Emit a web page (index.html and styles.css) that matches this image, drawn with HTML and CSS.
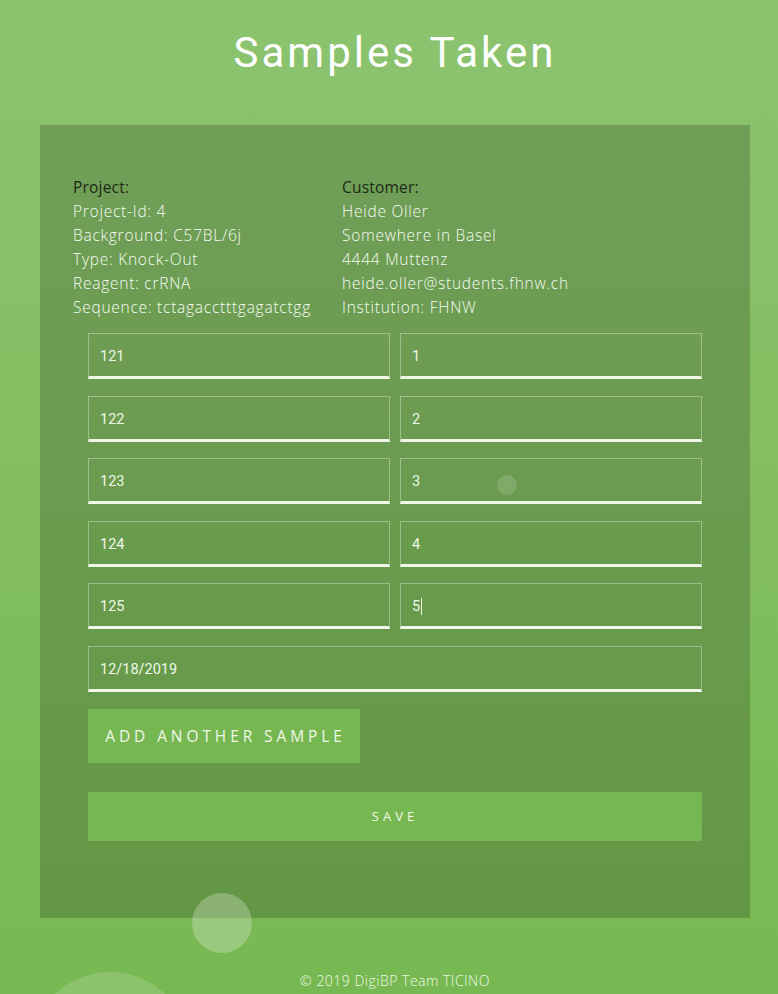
FILE: index.html
```html
<!DOCTYPE html>
<html lang="en">
<head>
<meta charset="utf-8">
<title>Samples Taken</title>
<link rel="stylesheet" href="styles.css">
</head>
<body>
<div class="bubbles">
  <span class="bubble b1"></span>
  <span class="bubble b2"></span>
  <span class="bubble b3"></span>
</div>
<main class="page">
  <h1 class="title">Samples Taken</h1>
  <section class="panel">
    <div class="info">
      <div class="col">
        <div class="head">Project:</div>
        <div>Project-Id: 4</div>
        <div>Background: C57BL/6j</div>
        <div>Type: Knock-Out</div>
        <div>Reagent: crRNA</div>
        <div>Sequence: tctagacctttgagatctgg</div>
      </div>
      <div class="col">
        <div class="head">Customer:</div>
        <div>Heide Oller</div>
        <div>Somewhere in Basel</div>
        <div>4444 Muttenz</div>
        <div>heide.oller@students.fhnw.ch</div>
        <div>Institution: FHNW</div>
      </div>
    </div>
    <form class="form">
      <div class="row"><input class="field" value="121"><input class="field" value="1"></div>
      <div class="row"><input class="field" value="122"><input class="field" value="2"></div>
      <div class="row"><input class="field" value="123"><input class="field" value="3"></div>
      <div class="row"><input class="field" value="124"><input class="field" value="4"></div>
      <div class="row"><input class="field" value="125"><div class="field caret-field">5<span class="caret"></span></div></div>
      <div class="row single"><input class="field" value="12/18/2019"></div>
      <div class="actions"><button type="button" class="btn add">ADD ANOTHER SAMPLE</button></div>
      <button type="button" class="btn save">SAVE</button>
    </form>
  </section>
  <footer class="footer">© 2019 DigiBP Team TICINO</footer>
</main>
</body>
</html>
```

FILE: styles.css
```css
* { box-sizing: border-box; }
html, body { margin: 0; height: 100%; }
body {
  background: linear-gradient(to bottom, #8cc36f 0%, #78b852 100%);
  font-family: "Open Sans", "Noto Sans", sans-serif;
  overflow: hidden;
  position: relative;
}
.bubbles { position: absolute; inset: 0; pointer-events: none; z-index: 2; }
.bubble { position: absolute; border-radius: 50%; background: rgba(255,255,255,0.25); }
.b1 { left: 192px; top: 893px; width: 60px; height: 60px; }
.b2 { left: 497px; top: 475px; width: 20px; height: 20px; background: rgba(255,255,255,0.15); }
.b3 { left: 30px; top: 972px; width: 160px; height: 160px; background: rgba(255,255,255,0.15); }
.page { padding: 0 28px 0 40px; }
.title {
  margin: 0;
  padding-top: 27px;
  height: 125px;
  text-align: center;
  font-family: Roboto, sans-serif;
  font-weight: 400;
  font-size: 42px;
  letter-spacing: 3px;
  color: #ffffff;
  line-height: 52px;
}
.panel {
  background: rgba(0,0,0,0.18);
  padding: 50px 33px 77px;
  height: 793px;
}
.info {
  display: grid;
  grid-template-columns: 269px 1fr;
  font-size: 15.5px;
  font-weight: 300;
  letter-spacing: 0.75px;
  line-height: 24px;
  color: #f6fcf2;
}
.info .head { color: #1c2a14; font-weight: 400; letter-spacing: 0.2px; }
.form { margin: 14px 15px 0; }
.row { display: grid; grid-template-columns: 1fr 1fr; gap: 10px; margin-bottom: 16.6px; }
.row.single { grid-template-columns: 1fr; }
.field {
  width: 100%;
  height: 46px;
  background: transparent;
  border: 1px solid rgba(255,255,255,0.35);
  border-bottom: 3px solid #eef7e8;
  padding: 3px 11px 0;
  font-family: Roboto, sans-serif;
  font-size: 14.5px;
  color: #eef8e6;
  outline: none;
  margin: 0;
  min-width: 0;
}
.caret-field { display: flex; align-items: center; }
.caret { display: inline-block; width: 1px; height: 17px; background: #eaf6e2; margin-left: 1px; }
.actions { display: flex; margin-bottom: 29px; }
.btn {
  border: none;
  background: #77b751;
  color: #f0f8ea;
  font-family: "Open Sans", sans-serif;
  cursor: pointer;
}
.add { height: 54px; width: 272px; padding: 0; font-size: 15.5px; letter-spacing: 3.9px; text-indent: 3px; }
.save { width: 100%; height: 49px; font-size: 13px; letter-spacing: 4px; }
.footer {
  text-align: center;
  padding-top: 53px;
  font-size: 14px;
  font-weight: 300;
  letter-spacing: 0.5px;
  color: #eef8e6;
}
```
